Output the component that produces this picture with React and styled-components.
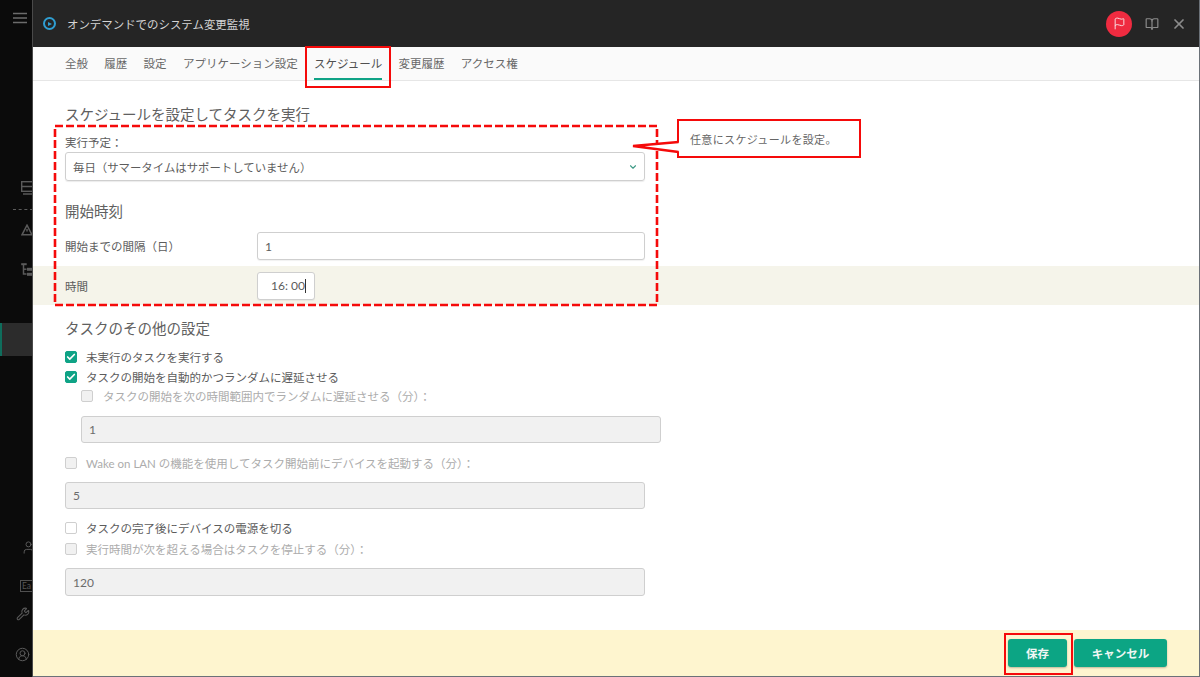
import React from "react";
import styled, { createGlobalStyle } from "styled-components";
import { Check, ChevronDown, X, BookOpen, Flag, User, Wrench, CircleUserRound } from "lucide-react";

const Global = createGlobalStyle`
  html, body { margin: 0; padding: 0; width: 1200px; height: 677px; overflow: hidden; background: #fff; }
  body { font-family: Lato, "Noto Sans CJK JP", sans-serif; color: #5c5c5c; }
  #root { height: 100%; }
  * { box-sizing: border-box; }
`;

const Page = styled.div`
  position: relative;
  display: flex;
  width: 1200px;
  height: 677px;
  overflow: hidden;
  border-right: 1px solid #6b7178;
`;
const Sidebar = styled.aside`
  width: 33px;
  flex: none;
  background: #0b0b0b;
  color: #5a5a5a;
  border-right: 1px solid #4a4a4a;
  display: flex;
  flex-direction: column;
  align-items: flex-start;
  overflow: hidden;
`;
const SideIcon = styled.div`
  width: 32px;
  height: ${p => p.$h || 20}px;
  margin-top: ${p => p.$mt || 0}px;
  padding-left: ${p => p.$pl ?? 21}px;
  display: flex;
  align-items: center;
  flex: none;
  overflow: hidden;
  svg { flex: none; }
`;
const Burger = styled(SideIcon)`
  color: #6c6c6c;
  padding-left: 13px;
`;
const DotRule = styled.div`
  width: 20px;
  margin: 11px 0 0 13px;
  border-top: 1px dashed #5c5c5c;
  flex: none;
`;
const ActiveItem = styled.div`
  width: 32px;
  height: 33px;
  margin-top: 44px;
  flex: none;
  background: #2c2c2c;
  border-left: 2px solid #0f6d5c;
`;
const EaMark = styled.span`
  flex: none;
  width: 12px;
  height: 12px;
  font-size: 8.5px;
  line-height: 10px;
  text-align: center;
  color: #555;
  border: 1px solid #505050;
  border-right: none;
  white-space: nowrap;
`;
const Main = styled.main`
  flex: 1;
  min-width: 0;
  display: flex;
  flex-direction: column;
`;
const Header = styled.header`
  height: 47px;
  flex: none;
  background: #252525;
  display: flex;
  align-items: center;
  padding: 0 12px 0 10px;
  color: #d8d8d8;
`;
const PlayBadge = styled.span`
  width: 13px;
  height: 13px;
  border: 2px solid #2f9ed2;
  border-radius: 50%;
  display: inline-flex;
  align-items: center;
  justify-content: center;
  margin-right: 11px;
  &::after {
    content: "";
    border-left: 4px solid #2f9ed2;
    border-top: 2.5px solid transparent;
    border-bottom: 2.5px solid transparent;
    margin-left: 1px;
  }
`;
const Title = styled.h1`
  flex: 1;
  margin: 0;
  font-size: 11.45px;
  font-weight: 400;
  color: #d4d4d4;
`;
const HeaderActions = styled.div`
  display: flex;
  align-items: center;
  color: #8c8c8c;
`;
const FlagBadge = styled.span`
  width: 26px;
  height: 26px;
  border-radius: 50%;
  background: #ef2b40;
  color: #f9dfe2;
  display: inline-flex;
  align-items: center;
  justify-content: center;
  margin-right: 13px;
`;
const CloseWrap = styled.span`
  display: inline-flex;
  margin-left: 12px;
`;
const Tabs = styled.nav`
  height: 34px;
  flex: none;
  background: #fafafa;
  border-bottom: 1px solid #e6e6e6;
  display: flex;
  padding-left: 32px;
  gap: 16.3px;
`;
const Tab = styled.div`
  height: 33px;
  padding-top: 8px;
  font-size: 11.5px;
  line-height: 17px;
  white-space: nowrap;
  color: ${p => (p.$active ? "#505050" : "#686868")};
  position: relative;
  ${p => p.$active && `
    &::after {
      content: "";
      position: absolute;
      left: 0; right: 0; bottom: 0;
      height: 2px;
      background: #0fa386;
    }
  `}
`;
const Content = styled.section`
  flex: 1;
  min-height: 0;
  padding-top: 24px;
  background: #fff;
`;
const Indent = styled.div`
  padding: 0 554px 0 32px;
`;
const SectionTitle = styled.h2`
  margin: ${p => p.$mt || 0}px 0 0;
  font-size: 14.5px;
  font-weight: 400;
  line-height: 20px;
  color: #606060;
`;
const FieldLabel = styled.div`
  margin-top: 11px;
  font-size: 11.5px;
  line-height: 14px;
  color: #5c5c5c;
`;
const Select = styled.div`
  height: 29px;
  margin-top: 2px;
  border: 1px solid #cfcfcf;
  border-radius: 3px;
  box-shadow: 0 1px 1px rgba(0,0,0,.08);
  display: flex;
  align-items: center;
  justify-content: space-between;
  padding: 0 6px 0 7px;
  font-size: 11.4px;
  color: #5c5c5c;
  svg { color: #3e9a86; }
`;
const FormRow = styled.div`
  display: flex;
  align-items: center;
  height: ${p => p.$h}px;
  margin-top: ${p => p.$mt || 0}px;
  padding: ${p => (p.$band ? "0 554px 0 32px" : "0")};
  background: ${p => (p.$band ? "#f5f4ea" : "transparent")};
`;
const RowLabel = styled.div`
  width: 192px;
  flex: none;
  font-size: 11.5px;
  color: #5c5c5c;
`;
const TextBox = styled.div`
  height: 28px;
  flex: ${p => (p.$short ? "none" : 1)};
  width: ${p => (p.$short ? "58px" : "auto")};
  border: 1px solid #cfcfcf;
  border-radius: 3px;
  box-shadow: 0 1px 1px rgba(0,0,0,.06);
  background: #fff;
  display: flex;
  align-items: center;
  padding-left: ${p => (p.$short ? 13 : 7)}px;
  font-size: 12px;
  color: #5c5c5c;
`;
const Caret = styled.span`
  width: 1px;
  height: 14px;
  background: #333;
`;
const CheckRow = styled.label`
  display: flex;
  align-items: center;
  height: 20px;
  margin-top: ${p => p.$mt ?? 0}px;
  margin-left: ${p => (p.$nested ? 16 : 0)}px;
  font-size: 11.5px;
  color: ${p => (p.$disabled ? "#acacac" : "#5c5c5c")};
  white-space: nowrap;
`;
const Box = styled.span`
  width: 12px;
  height: 12px;
  flex: none;
  margin-right: ${p => (p.$nested ? 10 : 9)}px;
  border-radius: 2px;
  border: 1px solid ${p => (p.$checked ? "#0fa386" : "#cfcfcf")};
  background: ${p => (p.$checked ? "#0fa386" : p.$disabled ? "#f1f1f1" : "#fff")};
  color: #fff;
  display: inline-flex;
  align-items: center;
  justify-content: center;
`;
const DisabledBox = styled.div`
  height: ${p => p.$h || 27}px;
  margin-top: ${p => p.$mt || 0}px;
  margin-left: ${p => (p.$nested ? 16 : 0)}px;
  margin-right: ${p => (p.$nested ? -16 : 0)}px;
  background: #f1f1f1;
  border: 1px solid #cfcfcf;
  border-radius: 3px;
  display: flex;
  align-items: center;
  padding-left: 7px;
  font-size: 12px;
  color: #6c6c6c;
`;
const Footer = styled.footer`
  height: 47px;
  flex: none;
  background: #fef5cf;
  border-bottom: 1px solid #6b7178;
  display: flex;
  align-items: center;
  justify-content: flex-end;
  padding: 0 32px 0 0;
  gap: 7px;
`;
const Button = styled.button`
  height: 28px;
  width: ${p => p.$w}px;
  border: none;
  border-radius: 3px;
  background: #0ca584;
  color: #f0f7f4;
  font: 700 11.5px Lato, "Noto Sans CJK JP", sans-serif;
  box-shadow: 0 1px 2px rgba(0,0,0,.25);
  padding: 0;
`;
const RedFrame = styled.div`
  position: absolute;
  left: ${p => p.$l}px;
  top: ${p => p.$t}px;
  width: ${p => p.$w}px;
  height: ${p => p.$h}px;
  border: 2px solid #f50a0a;
  pointer-events: none;
`;
const DashedFrame = styled(RedFrame)`
  border: none;
  svg { display: block; overflow: visible; }
`;
const CalloutText = styled.div`
  position: absolute;
  left: 677px;
  top: 119px;
  width: 184px;
  height: 39px;
  background: #fff;
  border: 2px solid #f50a0a;
  display: flex;
  align-items: center;
  padding-left: 11px;
  font-size: 11px;
  color: #666;
  letter-spacing: .35px;
`;
const CalloutTail = styled.svg`
  position: absolute;
  left: 630px;
  top: 130px;
  overflow: visible;
`;

const Check2 = ({ checked, disabled, nested, children, mt }) => (
  <CheckRow $disabled={disabled} $nested={nested} $mt={mt}>
    <Box $checked={checked} $disabled={disabled} $nested={nested}>
      {checked && <Check size={10} strokeWidth={4} />}
    </Box>
    {children}
  </CheckRow>
);

const BurgerIcon = () => (
  <svg width="14" height="12" viewBox="0 0 14 12" fill="none" stroke="currentColor" strokeWidth="1.6">
    <path d="M0 1.5h14M0 6h14M0 10.5h14" />
  </svg>
);
const ListBoxIcon = () => (
  <svg width="13" height="14" viewBox="0 0 13 14" fill="none" stroke="currentColor" strokeWidth="1.4">
    <rect x=".7" y=".7" width="13" height="9.6" />
    <path d="M.7 5.5h13M2 13h11" />
  </svg>
);
const WarnIcon = () => (
  <svg width="12" height="12" viewBox="0 0 12 12" fill="none" stroke="currentColor" strokeWidth="1.5">
    <path d="M6 1.2 11 10.8H1Z" />
    <path d="M6 5v2.5" />
  </svg>
);
const TreeIcon = () => (
  <svg width="13" height="13" viewBox="0 0 13 13" fill="none" stroke="currentColor" strokeWidth="1.5">
    <rect x=".2" y=".2" width="5.5" height="2" fill="currentColor" stroke="none" />
    <path d="M2.5 2v9h3" />
    <path d="M3 6.2h2.5" />
    <rect x="6" y="4.8" width="7" height="3" fill="currentColor" stroke="none" />
    <rect x="6" y="9.8" width="7" height="3" fill="currentColor" stroke="none" />
  </svg>
);

export default function App() {
  return (
    <Page>
      <Global />
      <Sidebar>
        <Burger $mt={8}><BurgerIcon /></Burger>
        <SideIcon $mt={150}><ListBoxIcon /></SideIcon>
        <DotRule />
        <SideIcon $mt={10}><WarnIcon /></SideIcon>
        <SideIcon $mt={19}><TreeIcon /></SideIcon>
        <ActiveItem />
        <SideIcon $mt={181}><User size={15} strokeWidth={1.6} /></SideIcon>
        <SideIcon $mt={19} $pl={20}><EaMark>Ea</EaMark></SideIcon>
        <SideIcon $mt={8} $pl={16}><Wrench size={14} strokeWidth={1.8} /></SideIcon>
        <SideIcon $mt={20} $pl={15}><CircleUserRound size={15} strokeWidth={1.6} /></SideIcon>
      </Sidebar>
      <Main>
        <Header>
          <PlayBadge />
          <Title>オンデマンドでのシステム変更監視</Title>
          <HeaderActions>
            <FlagBadge><Flag size={13} strokeWidth={1.8} /></FlagBadge>
            <BookOpen size={14} strokeWidth={2} />
            <CloseWrap><X size={16} strokeWidth={2.6} /></CloseWrap>
          </HeaderActions>
        </Header>
        <Tabs>
          <Tab>全般</Tab>
          <Tab>履歴</Tab>
          <Tab>設定</Tab>
          <Tab>アプリケーション設定</Tab>
          <Tab $active>スケジュール</Tab>
          <Tab>変更履歴</Tab>
          <Tab>アクセス権</Tab>
        </Tabs>
        <Content>
          <Indent>
            <SectionTitle>スケジュールを設定してタスクを実行</SectionTitle>
            <FieldLabel>実行予定：</FieldLabel>
            <Select>毎日（サマータイムはサポートしていません）<ChevronDown size={10} strokeWidth={2.6} /></Select>
            <SectionTitle $mt={21}>開始時刻</SectionTitle>
            <FormRow $h={28} $mt={10}>
              <RowLabel>開始までの間隔（日）</RowLabel>
              <TextBox>1</TextBox>
            </FormRow>
          </Indent>
          <FormRow $band $h={39} $mt={6}>
            <RowLabel>時間</RowLabel>
            <TextBox $short>16: 00<Caret /></TextBox>
          </FormRow>
          <Indent>
            <SectionTitle $mt={14}>タスクのその他の設定</SectionTitle>
            <Check2 checked mt={8}>未実行のタスクを実行する</Check2>
            <Check2 checked>タスクの開始を自動的かつランダムに遅延させる</Check2>
            <Check2 disabled nested mt={-1}>タスクの開始を次の時間範囲内でランダムに遅延させる（分）：</Check2>
            <DisabledBox $nested $mt={10}>1</DisabledBox>
            <Check2 disabled mt={10}>Wake on LAN の機能を使用してタスク開始前にデバイスを起動する（分）：</Check2>
            <DisabledBox $mt={9}>5</DisabledBox>
            <Check2 mt={9}>タスクの完了後にデバイスの電源を切る</Check2>
            <Check2 disabled mt={1}>実行時間が次を超える場合はタスクを停止する（分）：</Check2>
            <DisabledBox $mt={9} $h={28}>120</DisabledBox>
          </Indent>
        </Content>
        <Footer>
          <Button $w={59}>保存</Button>
          <Button $w={93}>キャンセル</Button>
        </Footer>
      </Main>

      <RedFrame $l={305} $t={46} $w={86} $h={42} />
      <RedFrame $l={1004} $t={633} $w={69} $h={42} />
      <DashedFrame $l={54} $t={125} $w={605} $h={181}>
        <svg width="605" height="181">
          <rect x="1" y="1" width="602" height="179" fill="none" stroke="#f50a0a" strokeWidth="2.6" strokeDasharray="8 3" />
        </svg>
      </DashedFrame>
      <CalloutText>任意にスケジュールを設定。</CalloutText>
      <CalloutTail width="50" height="30">
        <polygon points="3,16 50,12.5 50,21.5" fill="#fff" />
        <polyline points="48.5,12 3,16 48.5,22" fill="none" stroke="#f50a0a" strokeWidth="2.4" />
      </CalloutTail>
    </Page>
  );
}
